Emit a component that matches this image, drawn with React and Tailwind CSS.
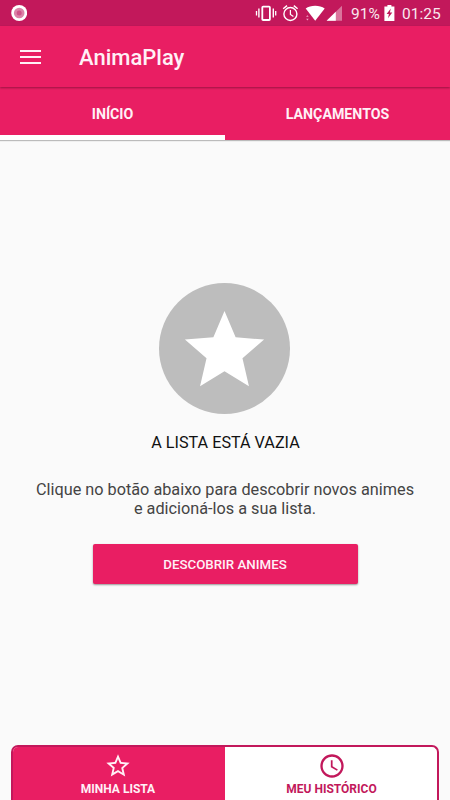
import React, { useState } from "react";

function StatusBar() {
  return (
    <div className="flex h-[26px] items-center bg-[#c2185b] text-white">
      <svg className="ml-[11px] h-4 w-4" viewBox="0 0 16 16">
        <circle cx="8.2" cy="8" r="8" fill="#fff" />
        <circle cx="8.2" cy="8" r="5.3" fill="#dc82a8" />
        <circle cx="8.2" cy="8" r="2.5" fill="#cf5288" />
      </svg>

      <svg className="ml-auto h-[26px] w-[90px]" viewBox="0 0 90 26">
        {/* vibrate */}
        <g fill="none" stroke="#fff">
          <rect x="7.3" y="6.6" width="7.6" height="13.4" rx="0.8" strokeWidth="1.8" />
          <path d="M3.9 8.5v9M18.3 8.5v9" strokeWidth="1.4" />
          <path d="M1.5 11v4.4M20.7 11v4.4" strokeWidth="1.3" />
        </g>
        {/* alarm */}
        <g fill="none" stroke="#fff" strokeWidth="1.4">
          <circle cx="35.4" cy="14" r="6.5" />
          <path d="M35.4 10v4.4l3 2" strokeWidth="1.2" />
          <path d="M28.2 8.8l3.8-3.2M42.6 8.8l-3.8-3.2" />
        </g>
        {/* wifi */}
        <path d="M50.7 8.6C55.5 4.9 64.8 4.9 69.7 8.6L60.2 20.8z" fill="#fff" />
        <path d="M52.4 15.2l1.3 1.6h-2.6zM52.4 20.4l1.3-1.6h-2.6z" fill="#f0a8c6" />
        {/* signal */}
        <path d="M87 5.8v15H71.6z" fill="#fff" fillOpacity="0.4" />
        <path d="M80.8 11.8v9h-9.2z" fill="#fff" />
      </svg>

      <span className="ml-[6px] w-[31px] pt-[3px] text-[15.5px] leading-none whitespace-nowrap opacity-90">91%</span>
      <svg className="ml-[2px] h-4 w-[11px]" viewBox="0 0 11 16">
        <path d="M3.4 0h4v1.5h3V16H0.4V1.5h3z" fill="#fff" />
        <path d="M6.8 3.6L2.6 9h2.3l-0.9 4.2L8.3 7.6H5.9z" fill="#c2185b" />
      </svg>
      <span className="mr-[9px] ml-[7px] w-[39px] pt-[3px] text-[15.5px] leading-none whitespace-nowrap opacity-90">01:25</span>
    </div>
  );
}

function Header() {
  return (
    <header className="relative z-10 flex h-[61px] items-center bg-[#e91e63] shadow-[0_1px_2px_rgba(0,0,0,0.35)]">
      <button className="ml-5 flex w-[21px] flex-col gap-[4px]" aria-label="Menu">
        <span className="h-[2px] w-full bg-[#fff0f6]" />
        <span className="h-[2px] w-full bg-[#fff0f6]" />
        <span className="h-[2px] w-full bg-[#fff0f6]" />
      </button>
      <h1 className="ml-[38px] pt-[2px] text-[22px] leading-none font-medium text-[#fff0f6]">AnimaPlay</h1>
    </header>
  );
}

export default function App() {
  const [tab, setTab] = useState("inicio");

  const tabs = [
    { id: "inicio", label: "INÍCIO" },
    { id: "lancamentos", label: "LANÇAMENTOS" },
  ];

  return (
    <div className="flex h-[800px] w-[450px] flex-col overflow-hidden bg-[#fafafa] font-[Roboto,sans-serif]">
      <StatusBar />
      <Header />

      {/* Tabs */}
      <nav className="grid h-[53px] shrink-0 grid-cols-2 bg-[#e91e63] shadow-[0_1px_1px_rgba(0,0,0,0.25)]">
        {tabs.map((t) => (
          <button
            key={t.id}
            onClick={() => setTab(t.id)}
            className={`border-b-5 pt-[7px] text-[14.2px] leading-none font-bold text-[#fff0f6] ${
              tab === t.id ? "border-white" : "border-transparent"
            }`}
          >
            {t.label}
          </button>
        ))}
      </nav>

      {/* Empty list */}
      <main className="flex flex-1 flex-col items-center pt-[143px] text-center">
        <div className="mr-px flex h-[131px] w-[131px] items-center justify-center rounded-full bg-[#bdbdbd]">
          <svg className="mt-[3px] h-[95px] w-[95px]" viewBox="0 0 24 24" fill="#fff">
            <path d="M12 17.27L18.18 21l-1.64-7.03L22 9.24l-7.19-.61L12 2 9.19 8.63 2 9.24l5.46 4.73L5.82 21z" />
          </svg>
        </div>
        <h2 className="mt-[19px] pl-px text-[16.2px] leading-[20px] text-[#111]">A LISTA ESTÁ VAZIA</h2>
        <p className="mt-[27px] text-[16.25px] leading-[19px] whitespace-nowrap text-[#444]">
          Clique no botão abaixo para descobrir novos animes
          <br />e adicioná-los a sua lista.
        </p>
        <button className="mt-[26px] h-10 w-[265px] rounded-[2px] bg-[#e91e63] pt-[2px] text-[13.3px] font-medium text-[#fff0f6] shadow-[0_1px_2px_rgba(0,0,0,0.4)]">
          DESCOBRIR ANIMES
        </button>
      </main>

      {/* Bottom navigation */}
      <footer className="mx-[11px] grid h-[55px] w-[428px] shrink-0 grid-cols-2 overflow-hidden rounded-t-[7px] border-2 border-b-0 border-[#c2185b] bg-white">
        <button className="flex flex-col items-center bg-[#e91e63] pr-[2px] text-[#fff0f6]">
          <svg className="mt-[5px] h-[28px] w-[28px]" viewBox="0 0 24 24" fill="currentColor">
            <path d="M22 9.24l-7.19-.62L12 2 9.19 8.63 2 9.24l5.46 4.73L5.82 21 12 17.27 18.18 21l-1.63-7.03L22 9.24zM12 15.4l-3.76 2.27 1-4.28-3.32-2.88 4.38-.38L12 6.1l1.71 4.04 4.38.38-3.32 2.88 1 4.28L12 15.4z" />
          </svg>
          <span className="mt-[2px] text-[12px] leading-[14px] font-bold">MINHA LISTA</span>
        </button>
        <button className="flex flex-col items-center pl-px text-[#c2185b]">
          <svg className="mt-[5px] h-[28px] w-[28px]" viewBox="0 0 24 24" fill="currentColor">
            <path d="M11.99 2C6.47 2 2 6.48 2 12s4.47 10 9.99 10C17.52 22 22 17.52 22 12S17.52 2 11.99 2zM12 20c-4.42 0-8-3.58-8-8s3.58-8 8-8 8 3.58 8 8-3.58 8-8 8zm.5-13H11v6l5.25 3.15.75-1.23-4.5-2.67z" />
          </svg>
          <span className="mt-[2px] text-[12px] leading-[14px] font-bold">MEU HISTÓRICO</span>
        </button>
      </footer>
    </div>
  );
}
